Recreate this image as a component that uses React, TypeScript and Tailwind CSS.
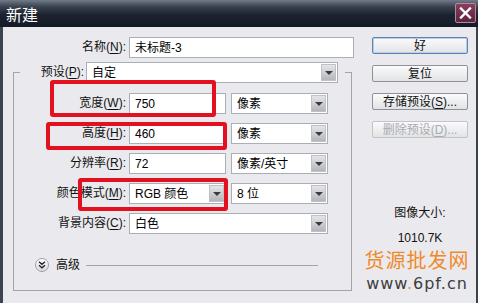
import React from "react";

const FONT = "font-['Liberation_Sans','Noto_Sans_CJK_SC',sans-serif]";

function Arrow() {
  return (
    <div className="w-[15px] h-[17px] mr-[1px] shrink-0 bg-gradient-to-b from-[#e4e5e8] via-[#cdcfd3] to-[#b3b5ba] border border-[#bfc1c5] flex items-center justify-center">
      <div className="w-0 h-0 border-l-[4px] border-r-[4px] border-t-[4px] border-l-transparent border-r-transparent border-t-[#3c3c3c]" />
    </div>
  );
}

function Field({ children, w }: { children?: React.ReactNode; w: string }) {
  return (
    <div className={`${w} h-[21px] shrink-0 bg-white border border-[#a9afb6] flex items-center pl-[5px] text-[12px] text-black`}>
      {children}
    </div>
  );
}

function Drop({ children, w }: { children?: React.ReactNode; w: string }) {
  return (
    <div className={`${w} h-[21px] shrink-0 bg-white border border-[#a9afb6] flex items-center pl-[5px] text-[12px] text-black`}>
      <span className="flex-1 truncate">{children}</span>
      <Arrow />
    </div>
  );
}

function Label({ text, k, w }: { text: string; k: string; w: string }) {
  return (
    <div className={`${w} shrink-0 text-right text-[12px] text-[#111] leading-[21px] whitespace-nowrap`}>
      {text}(<span className="underline underline-offset-2">{k}</span>):
    </div>
  );
}

function Btn({ children, primary, disabled }: { children: React.ReactNode; primary?: boolean; disabled?: boolean }) {
  const border = primary
    ? "border border-[#5f82b3] shadow-[inset_0_0_0_1px_#b9cde8]"
    : disabled
    ? "border border-[#c2c4c8]"
    : "border border-[#8e9196]";
  return (
    <div
      className={`w-[96px] h-[17px] rounded-[2px] ${border} bg-gradient-to-b from-[#fbfbfc] to-[#e2e3e6] flex items-center justify-center text-[12px] leading-none ${
        disabled ? "text-[#a9abaf]" : "text-[#111]"
      }`}
    >
      {children}
    </div>
  );
}

export default function App() {
  return (
    <div className={`w-[478px] h-[303px] relative overflow-hidden bg-[#eaeaee] ${FONT}`}>
      {/* title bar */}
      <div className="h-[27px] flex items-center justify-between pl-[6px] pr-[2px] bg-[linear-gradient(#707a8a_0%,#3a424f_25%,#1c2330_55%,#151b25_100%)]">
        <span className="text-white text-[16px] leading-none font-['Noto_Sans_CJK_SC',sans-serif]">新建</span>
        <div className="w-[21px] h-[20px] mt-[-2px] rounded-[2px] border border-[#b0899c] bg-gradient-to-b from-[#8a3d5f] to-[#5c2440] flex items-center justify-center">
          <svg width="13" height="12" viewBox="0 0 13 12">
            <path d="M2 1.5 L11 10.5 M11 1.5 L2 10.5" stroke="white" strokeWidth="2.4" strokeLinecap="square" />
          </svg>
        </div>
      </div>

      {/* body */}
      <div className="h-[276px] flex border-l-[3px] border-r-[2px] border-[#3d434d]">
        {/* left column */}
        <div className="w-[369px] shrink-0 pt-[10px]">
          <div className="flex items-center">
            <Label text="名称" k="N" w="w-[123px]" />
            <div className="ml-[3px]">
              <Field w="w-[225px]">未标题-3</Field>
            </div>
          </div>

          <fieldset className="ml-[10px] mt-[4px] w-[339px] border border-[#a3a5aa] pb-[18px]">
            <legend className="ml-[6px] p-0">
              <div className="flex items-center">
                <Label text="预设" k="P" w="w-[64px]" />
                <div className="ml-[2px] mr-[7px]">
                  <Drop w="w-[252px]">自定</Drop>
                </div>
              </div>
            </legend>

            <div className="mt-[10px] flex flex-col gap-[9px]">
              <div className="flex items-center">
                <Label text="宽度" k="W" w="w-[112px]" />
                <div className="ml-[3px] flex gap-[5px]">
                  <Field w="w-[97px]">750</Field>
                  <Drop w="w-[97px]">像素</Drop>
                </div>
              </div>
              <div className="flex items-center">
                <Label text="高度" k="H" w="w-[112px]" />
                <div className="ml-[3px] flex gap-[5px]">
                  <Field w="w-[97px]">460</Field>
                  <Drop w="w-[97px]">像素</Drop>
                </div>
              </div>
              <div className="flex items-center">
                <Label text="分辨率" k="R" w="w-[112px]" />
                <div className="ml-[3px] flex gap-[5px]">
                  <Field w="w-[97px]">72</Field>
                  <Drop w="w-[97px]">像素/英寸</Drop>
                </div>
              </div>
              <div className="flex items-center">
                <Label text="颜色模式" k="M" w="w-[112px]" />
                <div className="ml-[3px] flex gap-[5px]">
                  <Drop w="w-[97px]">RGB 颜色</Drop>
                  <Drop w="w-[97px]">8 位</Drop>
                </div>
              </div>
              <div className="flex items-center">
                <Label text="背景内容" k="C" w="w-[112px]" />
                <div className="ml-[3px]">
                  <Drop w="w-[199px]">白色</Drop>
                </div>
              </div>
            </div>

            <div className="mt-[24px] flex items-center h-[14px]">
              <div className="ml-[21px] w-[14px] h-[14px] rounded-full border border-[#9ea1a6] bg-gradient-to-b from-white to-[#d9dade] flex items-center justify-center">
                <svg width="8" height="8" viewBox="0 0 8 8">
                  <path d="M1 0.8 L4 3.3 L7 0.8 M1 4.3 L4 6.8 L7 4.3" stroke="#222" strokeWidth="1.3" fill="none" />
                </svg>
              </div>
              <span className="ml-[7px] text-[12px] text-[#111] leading-none">高级</span>
              <div className="ml-[6px] w-[232px] h-px bg-[#a3a5aa]" />
            </div>
          </fieldset>
        </div>

        {/* right column */}
        <div className="w-[96px] shrink-0 pt-[10px] flex flex-col">
          <div className="flex flex-col gap-[11px]">
            <Btn primary>好</Btn>
            <Btn>复位</Btn>
            <Btn>
              存储预设(<span className="underline underline-offset-2">S</span>)...
            </Btn>
            <Btn disabled>
              删除预设(<span className="underline underline-offset-2">D</span>)...
            </Btn>
          </div>
          <div className="mt-[67px] text-center text-[12px] leading-[16px] text-[#111]">图像大小:</div>
          <div className="mt-[9px] text-center text-[12px] leading-[16px] text-[#111]">1010.7K</div>
        </div>
      </div>

      {/* red annotation boxes */}
      <div className="absolute left-[50px] top-[80px] w-[166px] h-[37px] border-[4px] border-[#e3111f] rounded-[3px]" />
      <div className="absolute left-[46px] top-[122px] w-[181px] h-[28px] border-[4px] border-[#e3111f] rounded-[3px]" />
      <div className="absolute left-[78px] top-[178px] w-[150px] h-[33px] border-[4px] border-[#e3111f] rounded-[3px]" />

      {/* watermark */}
      <div className="absolute left-[362px] top-[248px] w-[110px] flex flex-col items-center">
        <div className="text-[20px] leading-[24px] text-[#ef8a2c] tracking-[1px] font-['Noto_Sans_CJK_SC',sans-serif]">货源批发网</div>
        <div className="mt-[2px] text-[16px] leading-[20px] text-[#3d3d3d] font-['DejaVu_Sans',sans-serif] tracking-[1px]">
          www<span className="text-[#ef8a2c]">.</span>6pf.cn
        </div>
      </div>
    </div>
  );
}
